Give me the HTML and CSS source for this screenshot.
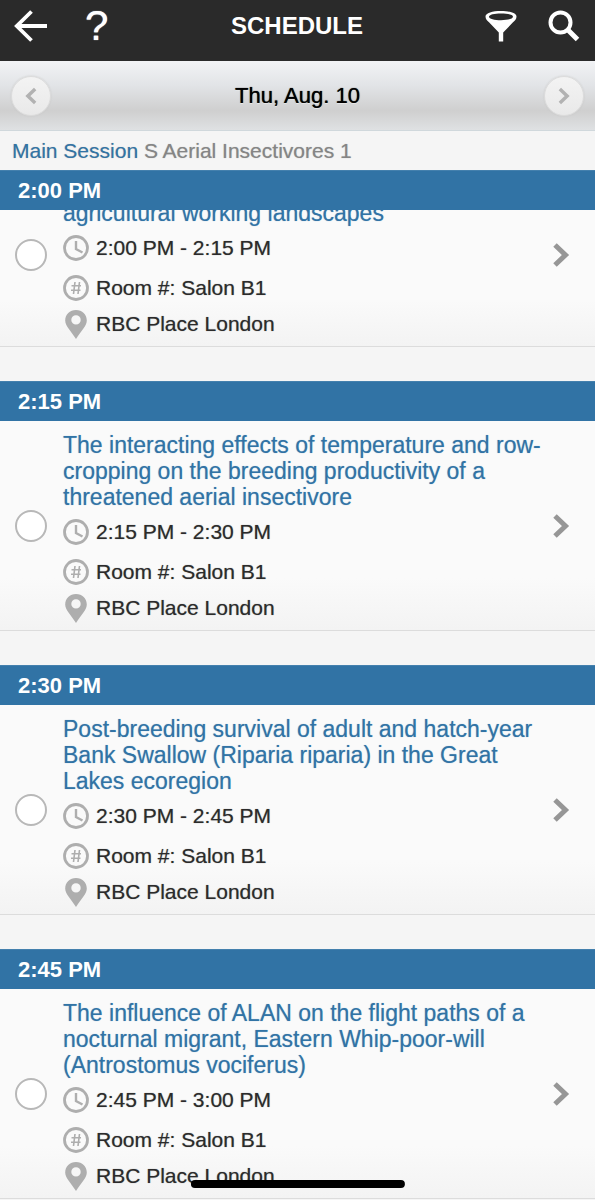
FILE: index.html
```
<!DOCTYPE html>
<html lang="en">

<head>
    <meta charset="UTF-8">
    <meta name="viewport" content="width=device-width, initial-scale=1.0">
    <title>Schedule</title>
    <link rel="stylesheet" href="styles.css">
</head>

<body>
    <!-- shared icons -->
    <svg class="sprite" aria-hidden="true">
        <symbol id="clock" viewBox="0 0 26 26">
            <circle cx="13" cy="13" r="11.5" fill="none" stroke="currentColor" stroke-width="2.8" />
            <path d="M13 6v8l6.500 3.500" fill="none" stroke="currentColor" stroke-width="2.4" />
        </symbol>
        <symbol id="room" viewBox="0 0 26 26">
            <circle cx="13" cy="13" r="11.5" fill="none" stroke="currentColor" stroke-width="2.8" />
            <path d="M12 7l-1.500 12M16.500 7l-1.500 12M8.500 10.800h9.500M8 15.300h9.500" fill="none" stroke="currentColor" stroke-width="1.600" />
        </symbol>
        <symbol id="pin" viewBox="0 0 22 29">
            <path fill="currentColor" fill-rule="evenodd" d="M11 0C4.800 0 0.200 4.500 0.200 10.400C0.200 16 5.500 20 11 29C16.500 20 21.800 16 21.800 10.400C21.800 4.500 17.200 0 11 0ZM11 5.200A4.700 4.700 0 1 1 11 14.600A4.700 4.700 0 0 1 11 5.200Z" />
        </symbol>
        <symbol id="chevron" viewBox="0 0 18 26">
            <path d="M3 3l10.500 10L3 23" fill="none" stroke="currentColor" stroke-width="5" />
        </symbol>
    </svg>

    <header class="header">
        <div class="header-left">
            <button class="icon-btn" aria-label="Back">
                <svg width="34" height="32" viewBox="0 0 34 32"><path d="M17.500 1.500L2.800 16l14.700 14.500M3 16h30" fill="none" stroke="#fff" stroke-width="3.800" /></svg>
            </button>
            <button class="icon-btn help">?</button>
        </div>
        <h1>SCHEDULE</h1>
        <div class="header-right">
            <button class="icon-btn" aria-label="Filter">
                <svg width="32" height="32" viewBox="0 0 32 32"><path fill="#fff" fill-rule="evenodd" d="M16 1C7.500 1 0.500 3 0.500 6.500C0.500 9 2 10.500 4 12.300L13.800 22.500V31.500H18.200V22.500L28 12.300C30 10.500 31.500 9 31.500 6.500C31.500 3 24.500 1 16 1ZM16 3.400C22.500 3.400 28 4.600 28 6.700C28 8.700 22.500 10.200 16 10.200C9.500 10.200 4 8.700 4 6.700C4 4.600 9.500 3.400 16 3.400Z" /></svg>
            </button>
            <button class="icon-btn" aria-label="Search">
                <svg width="32" height="32" viewBox="0 0 32 32"><g fill="none" stroke="#fff"><circle cx="12.500" cy="12.500" r="10" stroke-width="4" /><path d="M19.500 19.500L29.500 29.500" stroke-width="5" /></g></svg>
            </button>
        </div>
    </header>

    <nav class="date-bar">
        <button class="round-btn" aria-label="Previous day">
            <svg class="flip" width="14" height="18"><use href="#chevron" /></svg>
        </button>
        <span class="date">Thu, Aug. 10</span>
        <button class="round-btn" aria-label="Next day">
            <svg width="14" height="18"><use href="#chevron" /></svg>
        </button>
    </nav>

    <p class="session"><a href="#">Main Session</a> S Aerial Insectivores 1</p>

    <main>
        <section class="slot">
            <h2>2:00 PM</h2>
            <article class="talk scrolled">
                <input type="checkbox" aria-label="Select 2:00 PM talk">
                <div class="talk-body">
                    <h3><a href="#">agricultural working landscapes</a></h3>
                    <ul>
                        <li><svg class="icon"><use href="#clock" /></svg>2:00 PM - 2:15 PM</li>
                        <li><svg class="icon"><use href="#room" /></svg>Room #: Salon B1</li>
                        <li class="place"><svg class="icon"><use href="#pin" /></svg>RBC Place London</li>
                    </ul>
                </div>
                <svg class="arrow"><use href="#chevron" /></svg>
            </article>
        </section>

        <section class="slot">
            <h2>2:15 PM</h2>
            <article class="talk">
                <input type="checkbox" aria-label="Select 2:15 PM talk">
                <div class="talk-body">
                    <h3><a href="#">The interacting effects of temperature and row-cropping on the breeding productivity of a threatened aerial insectivore</a></h3>
                    <ul>
                        <li><svg class="icon"><use href="#clock" /></svg>2:15 PM - 2:30 PM</li>
                        <li><svg class="icon"><use href="#room" /></svg>Room #: Salon B1</li>
                        <li class="place"><svg class="icon"><use href="#pin" /></svg>RBC Place London</li>
                    </ul>
                </div>
                <svg class="arrow"><use href="#chevron" /></svg>
            </article>
        </section>

        <section class="slot">
            <h2>2:30 PM</h2>
            <article class="talk">
                <input type="checkbox" aria-label="Select 2:30 PM talk">
                <div class="talk-body">
                    <h3><a href="#">Post-breeding survival of adult and hatch-year Bank Swallow (Riparia riparia) in the Great Lakes ecoregion</a></h3>
                    <ul>
                        <li><svg class="icon"><use href="#clock" /></svg>2:30 PM - 2:45 PM</li>
                        <li><svg class="icon"><use href="#room" /></svg>Room #: Salon B1</li>
                        <li class="place"><svg class="icon"><use href="#pin" /></svg>RBC Place London</li>
                    </ul>
                </div>
                <svg class="arrow"><use href="#chevron" /></svg>
            </article>
        </section>

        <section class="slot">
            <h2>2:45 PM</h2>
            <article class="talk">
                <input type="checkbox" aria-label="Select 2:45 PM talk">
                <div class="talk-body">
                    <h3><a href="#">The influence of ALAN on the flight paths of a nocturnal migrant, Eastern Whip-poor-will (Antrostomus vociferus)</a></h3>
                    <ul>
                        <li><svg class="icon"><use href="#clock" /></svg>2:45 PM - 3:00 PM</li>
                        <li><svg class="icon"><use href="#room" /></svg>Room #: Salon B1</li>
                        <li class="place"><svg class="icon"><use href="#pin" /></svg>RBC Place London</li>
                    </ul>
                </div>
                <svg class="arrow"><use href="#chevron" /></svg>
            </article>
        </section>
    </main>

    <div class="home-indicator"></div>
</body>

</html>
```
FILE: styles.css
```
* {
    margin: 0;
    padding: 0;
    box-sizing: border-box;
}

body {
    background-color: #f5f5f5;
    color: #2b2b2b;
    font-family: "Helvetica Neue", "Liberation Sans", Arial, sans-serif;
    font-size: 21px;
}

a {
    color: #3173a5;
    text-decoration: none;
}

button {
    border: none;
    background: none;
    font-family: inherit;
    cursor: pointer;
}

svg {
    display: block;
}

.sprite {
    display: none;
}

.header {
    display: grid;
    grid-template-columns: 1fr auto 1fr;
    align-items: center;
    padding: 0 15px 10px 14px;
    height: 61px;
    background-color: #2a2a2a;
    color: #fff;
}

.header h1 {
    font-size: 24px;
    line-height: 51px;
}

.header-left,
.header-right {
    display: flex;
    align-items: center;
    gap: 37px;
}

.header-right {
    justify-content: flex-end;
    gap: 31px;
}

.icon-btn {
    color: #fff;
}

.help {
    font-size: 42px;
    line-height: 50px;
    text-shadow: 0 0 1px #fff;
}

.date-bar {
    display: flex;
    align-items: center;
    justify-content: space-between;
    padding: 0 11px;
    height: 70px;
    border-bottom: 1px solid #d0d8dc;
    background: linear-gradient(#f2f3f5, #e2e4e7 35%, #cfcfcf 72%, #dfe1e3);
}

.date {
    color: #000;
    font-size: 22px;
    text-shadow: 0 0 1px #000, 0 1px 0 #fff;
}

.round-btn {
    display: flex;
    align-items: center;
    justify-content: center;
    width: 40px;
    height: 40px;
    border: 1px solid #dcdcdc;
    border-radius: 50%;
    background: linear-gradient(#f3f3f3, #e9e9e9);
    box-shadow: 0 0 2px #c8c8c8;
    color: #b2b2b2;
}

.flip {
    transform: scaleX(-1);
}

.session {
    position: relative;
    z-index: 1;
    padding-left: 12px;
    background-color: #f5f5f5;
    line-height: 39px;
    color: #858585;
    text-shadow: 0 0 1px #b0b0b0;
}

.slot {
    margin-bottom: 34px;
}

.slot:last-child {
    margin-bottom: 0;
}

.slot h2 {
    position: relative;
    z-index: 1;
    padding-left: 18px;
    border-top: 1px solid #4480ad;
    background-color: #3173a5;
    color: #fff;
    font-size: 22px;
    line-height: 39px;
}

.talk {
    display: flex;
    align-items: center;
    padding: 0 25px 0 15px;
    border-bottom: 1px solid #dcdcdc;
    background: linear-gradient(#fafafa 75%, #f3f3f3);
}

/* partly under the sticky time bar */
.scrolled {
    min-height: 184px;
    margin-top: -47px;
}

.scrolled .talk-body {
    align-self: flex-end;
}

.talk input {
    appearance: none;
    flex: none;
    width: 32px;
    height: 32px;
    margin-right: 16px;
    border: 2px solid #b8b8b8;
    border-radius: 50%;
    background-color: #fff;
}

.talk-body {
    flex: 1;
    padding: 11px 0 6px;
}

.talk h3 {
    margin-bottom: 2px;
    font-size: 23px;
    font-weight: normal;
    line-height: 26px;
    text-shadow: 0 0 1px #8fb4d0;
}

.talk ul {
    list-style: none;
}

.talk li {
    display: flex;
    align-items: center;
    gap: 7px;
    line-height: 40px;
    text-shadow: 0 0 1px #888;
}

.talk .place {
    line-height: 32px;
}

.icon {
    width: 26px;
    height: 26px;
    color: #aeaeae;
}

.place .icon {
    height: 29px;
}

.arrow {
    flex: none;
    width: 18px;
    height: 26px;
    color: #969696;
}

.home-indicator {
    position: fixed;
    bottom: 12px;
    left: 50%;
    width: 36%;
    height: 8px;
    border-radius: 4px;
    background-color: #000;
    transform: translateX(-50%);
}
```
